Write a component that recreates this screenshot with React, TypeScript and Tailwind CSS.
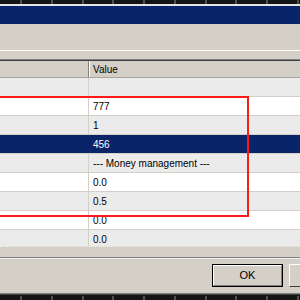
import React from 'react';

const rows = [
  { value: '', tone: 'gray' },
  { value: '777', tone: 'white' },
  { value: '1', tone: 'gray' },
  { value: '456', tone: 'selected' },
  { value: '--- Money management ---', tone: 'gray' },
  { value: '0.0', tone: 'white' },
  { value: '0.5', tone: 'gray' },
  { value: '0.0', tone: 'white' },
  { value: '0.0', tone: 'gray' },
];

const ticks = [21, 52, 83, 113, 144, 175, 206, 236, 267, 298];

const Ruler = ({ top }: { top: boolean }) => (
  <svg width="300" height="5" className="block bg-[#141414] shrink-0">
    {ticks.map((x) => (
      <line key={x} x1={x} x2={x} y1={top ? 0 : 1} y2={top ? 4 : 5} stroke="#8a8a8a" strokeWidth="1" />
    ))}
  </svg>
);

const App = () => {
  return (
    <div className="relative w-[300px] h-[300px] overflow-hidden bg-[#d4d0c8] flex flex-col font-['Liberation_Sans',Arial,sans-serif] text-[10px] text-black">
      <div className="h-[4px] overflow-hidden shrink-0">
        <Ruler top />
      </div>
      <div className="h-[2px] bg-[#e4e4e4] shrink-0" />
      {/* title bar */}
      <div className="h-[18px] bg-[#0a246a] shrink-0" />
      <div className="h-[26px] shrink-0" />
      <div className="h-[1px] bg-white shrink-0" />
      <div className="h-[8px] shrink-0" />

      {/* list */}
      <div className="h-[1px] bg-[#808080] shrink-0" />
      <div className="h-[1px] bg-[#404040] shrink-0" />
      <div className="grid grid-cols-[89px_1fr] h-[17px] shrink-0 border-b border-[#a8a59e]">
        <div className="border-r border-[#808080] shadow-[1px_0_0_#fff]" />
        <div className="pl-[4px] flex items-center">Value</div>
      </div>
      <div className="h-[168px] overflow-hidden shrink-0 flex flex-col">
        {rows.map((r, i) => (
          <div
            key={i}
            className={
              r.tone === 'selected'
                ? 'grid grid-cols-[89px_1fr] h-[19px] shrink-0 border-b border-[#d4d0c8] bg-[#0a246a] text-white'
                : r.tone === 'white'
                ? 'grid grid-cols-[89px_1fr] h-[19px] shrink-0 border-b border-[#d4d0c8] bg-white'
                : 'grid grid-cols-[89px_1fr] h-[19px] shrink-0 border-b border-[#d4d0c8] bg-[#ecebec]'
            }
          >
            <div className={r.tone === 'selected' ? '' : 'border-r border-[#d4d0c8]'} />
            <div className="pl-[4px] flex items-center whitespace-nowrap">{r.value}</div>
          </div>
        ))}
      </div>
      <div className="h-[1px] border-t border-dotted border-[#f4f4f4] shrink-0" />
      <div className="h-[10px] shrink-0" />
      <div className="h-[1px] bg-[#808080] shrink-0" />
      <div className="h-[1px] bg-[#f0efec] shrink-0" />

      {/* buttons */}
      <div className="h-[34px] shrink-0 flex items-start pt-[5px] pl-[212px] gap-[6px] overflow-hidden">
        <div className="w-[71px] h-[23px] shrink-0 border border-black">
          <div className="w-full h-full border-t border-l border-white border-b border-r border-b-[#808080] border-r-[#808080] flex items-center justify-center text-[11px]">
            OK
          </div>
        </div>
        <div className="w-[71px] h-[23px] shrink-0 border-t border-l border-white border-b border-r border-b-[#404040] border-r-[#404040]" />
      </div>

      <div className="h-[1px] bg-[#808080] shrink-0" />
      <div className="h-[1px] bg-[#404040] shrink-0" />
      <div className="h-[5px] overflow-hidden shrink-0">
        <Ruler top={false} />
      </div>

      {/* red highlight frame */}
      <div className="absolute left-[-4px] top-[96px] w-[253px] h-[121px] border-2 border-[#ff1a1a]" />
    </div>
  );
};

export default App;
